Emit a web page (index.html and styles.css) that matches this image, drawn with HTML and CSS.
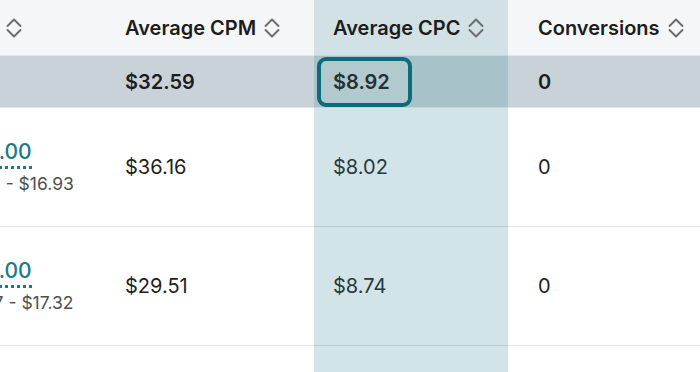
FILE: index.html
```html
<!DOCTYPE html>
<html>
<head>
<meta charset="utf-8">
<link rel="stylesheet" href="styles.css">
</head>
<body>
<div class="table">
  <div class="row head">
    <div class="cell c1"><span class="label">Bid</span>
      <svg class="sort" viewBox="0 0 16 22"><path d="M1.5 9 L8 2.5 L14.5 9 M1.5 13 L8 19.5 L14.5 13"/></svg></div>
    <div class="cell c2"><span class="label">Average CPM</span>
      <svg class="sort" viewBox="0 0 16 22"><path d="M1.5 9 L8 2.5 L14.5 9 M1.5 13 L8 19.5 L14.5 13"/></svg></div>
    <div class="cell c3"><span class="label">Average CPC</span>
      <svg class="sort" viewBox="0 0 16 22"><path d="M1.5 9 L8 2.5 L14.5 9 M1.5 13 L8 19.5 L14.5 13"/></svg></div>
    <div class="cell c4"><span class="label">Conversions</span>
      <svg class="sort" viewBox="0 0 16 22"><path d="M1.5 9 L8 2.5 L14.5 9 M1.5 13 L8 19.5 L14.5 13"/></svg></div>
  </div>
  <div class="row total">
    <div class="cell c1"></div>
    <div class="cell c2">$32.59</div>
    <div class="cell c3"><span class="focus">$8.92</span></div>
    <div class="cell c4">0</div>
  </div>
  <div class="row data">
    <div class="cell c1"><div class="bid"><span class="bid-val">$15.00</span><span class="range">$7.11 - $16.93</span></div></div>
    <div class="cell c2">$36.16</div>
    <div class="cell c3">$8.02</div>
    <div class="cell c4">0</div>
  </div>
  <div class="row data">
    <div class="cell c1"><div class="bid"><span class="bid-val">$15.00</span><span class="range">$7.17 - $17.32</span></div></div>
    <div class="cell c2">$29.51</div>
    <div class="cell c3">$8.74</div>
    <div class="cell c4">0</div>
  </div>
  <div class="row data">
    <div class="cell c1"></div>
    <div class="cell c2"></div>
    <div class="cell c3"></div>
    <div class="cell c4"></div>
  </div>
</div>
</body>
</html>
```

FILE: styles.css
```css
html, body {
  margin: 0;
  padding: 0;
  background: #ffffff;
  overflow: hidden;
  width: 700px;
  height: 372px;
}

body {
  font-family: Inter, "Liberation Sans", sans-serif;
  color: #1d1d1d;
}

.table {
  margin-left: -36px;
  width: 736px;
}

.row {
  display: grid;
  grid-template-columns: 141px 209px 194px 1fr;
}

.cell {
  display: flex;
  align-items: center;
  font-size: 20px;
  box-sizing: border-box;
  min-width: 0;
}

.c1 { padding-left: 0; }
.c2 { padding-left: 20px; }
.c3 { padding-left: 19px; }
.c4 { padding-left: 30px; }

/* header */
.head .cell {
  height: 56px;
  background: #f5f6f8;
  font-weight: 600;
  border-bottom: 1px solid #e4e7ea;
}
.head .c3 { background: #d1e1e5; border-bottom-color: #c4d6da; }

.label { white-space: nowrap; }

.sort {
  width: 16px;
  height: 22px;
  margin-left: 8px;
  flex: none;
}
.sort path {
  fill: none;
  stroke: #6b6b6b;
  stroke-width: 1.9;
  stroke-linecap: round;
  stroke-linejoin: round;
}
.c1 .sort { margin-left: 11px; }

/* totals */
.total .cell {
  height: 52px;
  background: #c9d2d9;
  font-weight: 600;
  border-bottom: 1px solid #dde3e7;
}
.total .c3 { background: #a7c2c8; border-bottom-color: #c4d6da; }

.focus {
  display: flex;
  align-items: center;
  box-sizing: border-box;
  height: 50px;
  margin-left: -16px;
  padding: 0 18px 0 12px;
  border: 4px solid #0c6c79;
  border-radius: 9px;
  background: #b2c9ce;
  color: #1f3235;
}

/* data */
.data .cell {
  height: 119px;
  border-bottom: 1px solid #e3e3e3;
  color: #222222;
}
.data .c3 {
  background: #d3e4e8;
  border-bottom-color: #b9cccf;
  color: #26393c;
}

.bid {
  display: flex;
  flex-direction: column;
  align-items: flex-start;
  white-space: nowrap;
}
.bid-val {
  color: #1b7a88;
  font-size: 21px;
  font-weight: 500;
  line-height: 24px;
  border-bottom: 3px dotted #1b7a88;
  padding-bottom: 2px;
}
.range {
  margin-top: 4px;
  font-size: 17.5px;
  color: #505050;
  line-height: 22px;
}
```
